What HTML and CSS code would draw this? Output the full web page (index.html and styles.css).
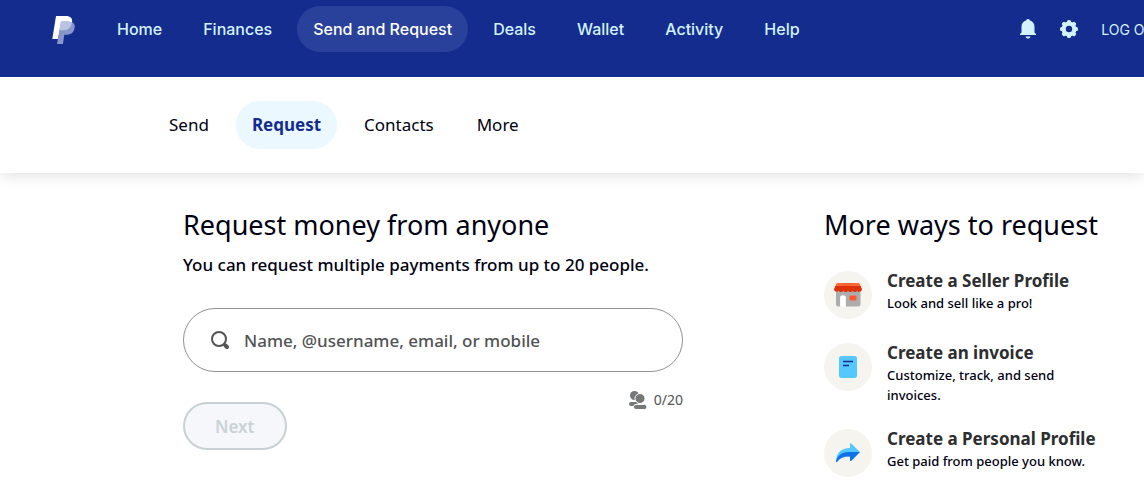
FILE: index.html
```
<!DOCTYPE html>
<html lang="en">
<head>
    <meta charset="UTF-8">
    <meta name="viewport" content="width=device-width, initial-scale=1.0">
    <title>Request Money - PayPal</title>
    <link rel="stylesheet" href="styles.css">
</head>
<body>

    <header class="header">
        <div class="header-inner">
            <a href="#" class="logo" aria-label="PayPal">
                <svg width="24" height="30" viewBox="0 0 24 30">
                    <path d="M4 1h9.500c5 0 7.500 2.300 6.500 7-1 5-4 7.300-9 7.300H7.700L6 24H.3z" fill="#fff"/>
                    <path d="M9 6.500h6c5.500 0 8.500 2 7.700 6.300-.900 5-4 7-8.200 7h-2.200L11 29H5z" fill="#8795cb"/>
                    <path d="M9 6.500h6c2 0 3.700.300 5 .900-.700 5-4 7.900-9 7.900H7.400z" fill="#bbc3e2"/>
                </svg>
            </a>
            <nav class="main-nav">
                <a href="#">Home</a>
                <a href="#">Finances</a>
                <a href="#" class="active">Send and Request</a>
                <a href="#">Deals</a>
                <a href="#">Wallet</a>
                <a href="#">Activity</a>
                <a href="#">Help</a>
            </nav>
            <div class="header-actions">
                <a href="#" aria-label="Notifications">
                    <svg width="18" height="20" viewBox="0 0 18 20" fill="#d3f2ff">
                        <path d="M9 0c.9 0 1.500.5 1.600 1.200C13.800 2 15.500 4.500 15.500 8v5.500L17 15v1H1v-1l1.500-1.500V8c0-3.500 1.700-6 4.900-6.800C7.500.5 8.100 0 9 0z"/>
                        <path d="M6.500 17.500h5c-.4 1.400-1.300 2-2.500 2s-2.100-.6-2.500-2z"/>
                    </svg>
                </a>
                <a href="#" aria-label="Settings">
                    <svg width="20" height="20" viewBox="0 0 20 20">
                        <g fill="#d3f2ff">
                            <circle cx="10" cy="10" r="7.500"/>
                            <rect x="8" y="1" width="4" height="18" rx="1.500"/>
                            <rect x="8" y="1" width="4" height="18" rx="1.500" transform="rotate(45 10 10)"/>
                            <rect x="8" y="1" width="4" height="18" rx="1.500" transform="rotate(90 10 10)"/>
                            <rect x="8" y="1" width="4" height="18" rx="1.500" transform="rotate(135 10 10)"/>
                        </g>
                        <circle cx="10" cy="10" r="3.200" fill="#142c8e"/>
                    </svg>
                </a>
                <a href="#" class="logout">LOG OUT</a>
            </div>
        </div>
    </header>

    <nav class="sub-nav">
        <a href="#">Send</a>
        <a href="#" class="active">Request</a>
        <a href="#">Contacts</a>
        <a href="#">More</a>
    </nav>

    <main class="content">
        <form class="request-form">
            <h1>Request money from anyone</h1>
            <p class="intro">You can request multiple payments from up to 20 people.</p>
            <label class="search">
                <svg width="20" height="20" viewBox="0 0 20 20" fill="none" stroke="#515354">
                    <circle cx="9" cy="9" r="7" stroke-width="2"/>
                    <path d="M14 14l1.500 1.500" stroke-width="2"/>
                    <path d="M15.300 15.300l1.700 1.700" stroke-width="4" stroke-linecap="round"/>
                </svg>
                <input type="text" name="recipient" aria-label="Recipient" placeholder="Name, @username, email, or mobile">
            </label>
            <div class="counter">
                <svg width="20" height="20" viewBox="0 0 20 20" fill="#757778">
                    <circle cx="6.500" cy="5.500" r="4.500"/>
                    <rect x="1" y="12" width="9" height="4" rx="2"/>
                    <circle cx="12" cy="8.500" r="5" stroke="#fff"/>
                    <rect x="5.500" y="14.500" width="13.500" height="5" rx="2.500" stroke="#fff"/>
                </svg>
                <span>0/20</span>
            </div>
            <button type="button" class="next" disabled>Next</button>
        </form>

        <aside class="more-ways">
            <h2>More ways to request</h2>
            <a href="#" class="way">
                <span class="way-icon">
                    <svg width="28" height="28" viewBox="0 0 28 28">
                        <path d="M2 9h24.500v14q0 2.500-2.500 2.500H11.700V16.500q0-2-2-2H8.300q-2 0-2 2v9H4.500Q2 25.500 2 23z" fill="#adadad"/>
                        <path d="M6.300 25.500v-9q0-2 2-2h1.400q2 0 2 2v9z" fill="#fff"/>
                        <rect x="15.500" y="14.500" width="7" height="5" rx="1" fill="#ff5a2d"/>
                        <path d="M4 2h20q1.500 0 2 1.500L27 6H1l1-2.500Q2.500 2 4 2z" fill="#ff6338"/>
                        <path d="M1.500 5h25L28 8c0 3-3.600 3.500-4.700 1.500-.7 2-3.900 2-4.600 0-.7 2-4 2-4.700 0-.7 2-4 2-4.700 0-.7 2-3.900 2-4.600 0C3.600 11.500 0 11 0 8z" fill="#dc3209"/>
                    </svg>
                </span>
                <span class="way-text">
                    <strong>Create a Seller Profile</strong>
                    <span>Look and sell like a pro!</span>
                </span>
            </a>
            <a href="#" class="way">
                <span class="way-icon">
                    <svg width="28" height="28" viewBox="0 0 28 28">
                        <rect x="5" y="3" width="18" height="22" rx="2.500" fill="#54c8ff"/>
                        <path d="M9 8.500h10M9 12.500h6" stroke="#142c8e" stroke-width="1.500"/>
                    </svg>
                </span>
                <span class="way-text">
                    <strong>Create an invoice</strong>
                    <span>Customize, track, and send invoices.</span>
                </span>
            </a>
            <a href="#" class="way">
                <span class="way-icon">
                    <svg width="28" height="28" viewBox="0 0 28 28">
                        <path d="M16 5q0-1.500 1.200-.5L26 13l-8.500 8.500q-1.500 1-1.500-.5v-3.500c-5-.5-10 1-13 5.500q-1 .5-1-1C2.500 14 7 9 16 9z" fill="#54c8ff"/>
                        <path d="M26 13l-8.500 8.500q-1.500 1-1.500-.5v-3.500c-5-.5-10 1-13 5.500q-1 .5-1-1C3.500 16.500 8 13 14 13z" fill="#1072eb"/>
                    </svg>
                </span>
                <span class="way-text">
                    <strong>Create a Personal Profile</strong>
                    <span>Get paid from people you know.</span>
                </span>
            </a>
        </aside>
    </main>

</body>
</html>
```

FILE: styles.css
```
* {
    box-sizing: border-box;
}

body {
    margin: 0;
    font-family: "Noto Sans", sans-serif;
    color: #001;
    background-color: #fff;
    overflow: hidden;
}

a {
    text-decoration: none;
    color: inherit;
}

svg {
    display: block;
    flex-shrink: 0;
}

h1, h2 {
    margin: 0;
    font-size: 27px;
    font-weight: 400;
    line-height: 36px;
}

.header {
    position: relative;
    z-index: 1;
    background-color: #142c8e;
}

/* wider than small windows, the right end is cut off */
.header-inner {
    display: flex;
    min-width: 1204px;
    padding: 6px 40px 25px 52px;
    font-family: Inter, sans-serif;
    color: #d3f2ff;
}

.logo {
    padding-top: 9px;
}

.main-nav {
    display: flex;
    gap: 9px;
    margin-left: 25px;
}

.main-nav a {
    padding: 0 16px;
    border-radius: 23px;
    font-size: 16px;
    font-weight: 500;
    line-height: 46px;
}

.main-nav .active {
    background-color: #29419a;
    color: #fff;
}

.header-actions {
    display: flex;
    align-items: center;
    gap: 22px;
    margin-left: auto;
}

.logout {
    font-size: 14px;
}

.sub-nav {
    display: flex;
    gap: 11px;
    padding: 24px 153px;
    box-shadow: 0 0 16px rgba(0, 0, 0, 0.16);
}

.sub-nav a {
    padding: 0 16px;
    border-radius: 24px;
    font-size: 17px;
    line-height: 48px;
}

.sub-nav .active {
    background-color: #ecf8ff;
    color: #142c8e;
    font-weight: 700;
}

.content {
    display: grid;
    grid-template-columns: minmax(0, 500px) 280px;
    justify-content: space-between;
    padding: 34px 40px 0 183px;
}

.intro {
    margin: 8px 0 29px;
    font-size: 17px;
    font-weight: 500;
    line-height: 28px;
}

.search {
    display: flex;
    align-items: center;
    gap: 14px;
    height: 64px;
    padding: 0 26px;
    border: 1px solid #909191;
    border-radius: 32px;
}

.search input {
    flex: 1;
    min-width: 0;
    padding: 0;
    border: none;
    outline: none;
    font: 500 17px "Noto Sans", sans-serif;
}

.search input::placeholder {
    color: #515354;
}

.counter {
    display: flex;
    align-items: center;
    justify-content: flex-end;
    gap: 6px;
    margin-top: 18px;
    font-size: 14px;
    line-height: 20px;
    color: #515354;
}

.next {
    display: block;
    margin-top: -8px;
    height: 48px;
    padding: 0 30px;
    border: 2px solid #c9d0d4;
    border-radius: 24px;
    background-color: #f5f7fa;
    color: #cbd2d6;
    font: 600 17px "Noto Sans", sans-serif;
}

.more-ways {
    display: flex;
    flex-direction: column;
}

.more-ways h2 {
    margin-bottom: 26px;
}

.way {
    display: flex;
    align-items: flex-start;
    gap: 15px;
    margin-bottom: 22px;
}

.way-icon {
    display: flex;
    flex-shrink: 0;
    align-items: center;
    justify-content: center;
    width: 48px;
    height: 48px;
    margin-top: 2px;
    border-radius: 50%;
    background-color: #f5f4ef;
}

.way-text {
    display: flex;
    flex-direction: column;
    font-size: 13px;
    font-weight: 500;
    line-height: 20px;
}

.way-text strong {
    font-size: 17px;
    line-height: 24px;
    font-weight: 700;
    color: #2c2e2f;
}
```
